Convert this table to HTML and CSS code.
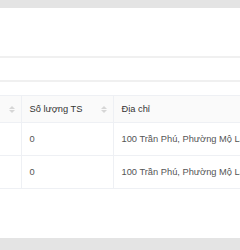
FILE: index.html
```html
<!DOCTYPE html>
<html lang="vi">
<head>
    <meta charset="UTF-8">
    <meta name="viewport" content="width=device-width, initial-scale=1.0">
    <title>Danh sách cơ sở</title>
    <link rel="stylesheet" href="styles.css">
</head>
<body>
    <div class="panel">
        <div class="panel-head"></div>
        <div class="panel-filter"></div>
        <div class="table-wrap">
            <table class="data-table">
                <colgroup>
                    <col class="col-name">
                    <col class="col-count">
                    <col class="col-address">
                </colgroup>
                <thead>
                    <tr>
                        <th><span class="th-inner"><span></span><i class="sorter"></i></span></th>
                        <th><span class="th-inner"><span>Số lượng TS</span><i class="sorter"></i></span></th>
                        <th><span class="th-inner"><span>Địa chỉ</span></span></th>
                    </tr>
                </thead>
                <tbody>
                    <tr>
                        <td></td>
                        <td>0</td>
                        <td>100 Trần Phú, Phường Mộ Lao, Hà Đông</td>
                    </tr>
                    <tr>
                        <td></td>
                        <td>0</td>
                        <td>100 Trần Phú, Phường Mộ Lao, Hà Đông</td>
                    </tr>
                </tbody>
            </table>
        </div>
    </div>
</body>
</html>
```

FILE: styles.css
```css
* {
    margin: 0;
    padding: 0;
    box-sizing: border-box;
}

body {
    font-family: "Liberation Sans", Arial, sans-serif;
    background: #e4e4e4;
    padding-top: 8px;
    height: 250px;
    overflow: hidden;
}

.panel {
    background: #fff;
    height: 230px;
    overflow: hidden;
}

.panel-head {
    height: 50px;
    border-bottom: 2px solid #f0f0f0;
}

.panel-filter {
    height: 24px;
    border-bottom: 2px solid #f0f0f0;
}

.table-wrap {
    margin-top: 13px;
    overflow: hidden;
}

.data-table {
    border-collapse: collapse;
    table-layout: fixed;
    width: 330px;
    font-size: 9.3px;
    color: #555;
}

.col-name { width: 21px; }
.col-count { width: 92px; }
.col-address { width: 217px; }

.data-table th,
.data-table td {
    border-bottom: 1px solid #eef0f4;
    border-right: 1px solid #eef0f4;
    text-align: left;
    white-space: nowrap;
    overflow: hidden;
    padding: 0 8px;
}

.data-table th:last-child,
.data-table td:last-child {
    border-right: none;
}

.data-table thead tr {
    border-top: 1px solid #eef0f4;
}

.data-table th {
    background: #fafafa;
    height: 27px;
    font-weight: normal;
    color: #333;
}

.data-table td {
    height: 33px;
    color: #555;
}

.th-inner {
    display: flex;
    align-items: center;
    justify-content: space-between;
}

/* up/down carets next to sortable headers */
.sorter {
    display: inline-flex;
    flex-direction: column;
    gap: 1px;
    margin-right: -2px;
}

.sorter::before,
.sorter::after {
    content: "";
    border-left: 3px solid transparent;
    border-right: 3px solid transparent;
}

.sorter::before {
    border-bottom: 3px solid #d6d6d6;
}

.sorter::after {
    border-top: 3px solid #d6d6d6;
}
```
